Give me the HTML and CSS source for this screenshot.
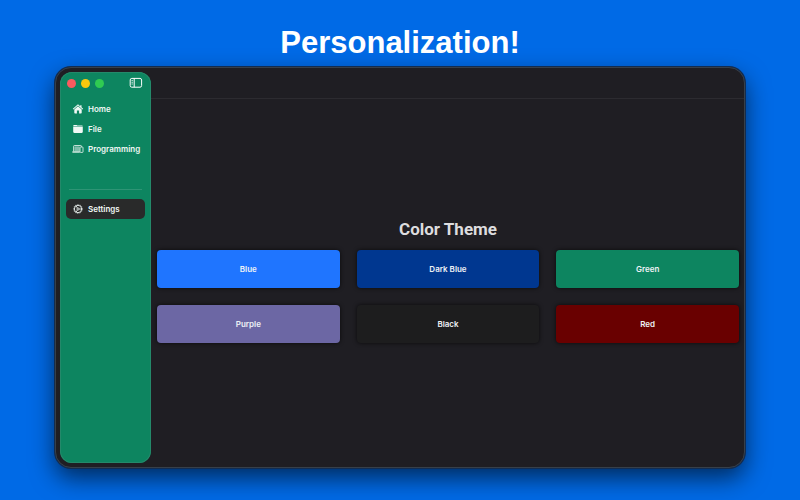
FILE: index.html
```html
<!DOCTYPE html>
<html lang="en">
<head>
  <meta charset="UTF-8">
  <title>Personalization</title>
  <link rel="stylesheet" href="styles.css">
</head>
<body>
  <h1 class="headline">Personalization!</h1>
  <div class="window">
    <aside class="sidebar">
      <div class="titlebar">
        <div class="lights">
          <button class="light close" aria-label="Close"></button>
          <button class="light minimize" aria-label="Minimize"></button>
          <button class="light zoom" aria-label="Zoom"></button>
        </div>
        <button class="toggle" aria-label="Toggle sidebar">
          <svg viewBox="0 0 14 12" width="14" height="12" fill="none" stroke="currentColor">
            <rect x="1.2" y="1.4" width="11.4" height="8.8" rx="1.6"/>
            <path d="M5.2 1.4v8.8"/>
            <path d="M2.5 3.6h1.4M2.5 5.3h1.4M2.5 7h1.4" stroke-width=".8"/>
          </svg>
        </button>
      </div>
      <nav class="nav">
        <a href="#home" class="item">
          <svg viewBox="0 0 12 12" width="12" height="12" fill="currentColor">
            <path d="M6 1.200.8 5.800l.7.7L6 2.600l4.500 3.900.7-.7-1.700-1.500V2.200H8.200v1z"/>
            <path d="M6 3.300 2.300 6.500v3.300c0 .4.300.7.700.7h1.900V7.600h2.200v2.900H9c.4 0 .7-.3.700-.7V6.500z"/>
          </svg>
          Home
        </a>
        <a href="#file" class="item">
          <svg viewBox="0 0 12 12" width="12" height="12" fill="currentColor">
            <path d="M1.200 3.600V3c0-.7.400-1.100 1.100-1.100h1.900c.7 0 .9.700 1.600.7h3.900c.7 0 1.100.4 1.100 1z"/>
            <path d="M1.200 4h9.600v4.800c0 .7-.4 1.100-1.100 1.100H2.300c-.7 0-1.100-.4-1.100-1.100z"/>
          </svg>
          File
        </a>
        <a href="#programming" class="item">
          <svg viewBox="0 0 12 12" width="12" height="12" fill="none" stroke="currentColor" stroke-width=".8">
            <path d="M1.600 8.300V3.300c0-.5.300-.8.800-.8h6.300c.5 0 .8.300.8.800v.5"/>
            <path d="M2.400 3.400h5.200v5H2.400z" fill="currentColor" fill-opacity=".5" stroke="none"/>
            <rect x="8" y="4" width="3" height="5.400" rx=".6"/>
            <path d="M.4 9h7.400" stroke-width="1.300"/>
          </svg>
          Programming
        </a>
        <hr class="divider">
        <a href="#settings" class="item active">
          <svg viewBox="0 0 12 12" width="12" height="12" fill="none" stroke="currentColor">
            <circle cx="6" cy="6" r="3.700" stroke-width=".9"/>
            <circle cx="6" cy="6" r="4.400" stroke-width=".7" stroke-dasharray=".8 .928"/>
            <circle cx="6" cy="6" r="1.100" stroke-width=".8"/>
            <path d="M7.100 6h2.600M5.400 5 4.100 2.800M5.400 7 4.100 9.200" stroke-width=".8"/>
          </svg>
          Settings
        </a>
      </nav>
    </aside>
    <main class="main">
      <div class="toolbar"></div>
      <section class="content">
        <h2 class="title">Color Theme</h2>
        <div class="themes">
          <button class="theme blue">Blue</button>
          <button class="theme dark-blue">Dark Blue</button>
          <button class="theme green">Green</button>
          <button class="theme purple">Purple</button>
          <button class="theme black">Black</button>
          <button class="theme red">Red</button>
        </div>
      </section>
    </main>
  </div>
</body>
</html>
```

FILE: styles.css
```css
:root {
  --page: #006ae6;
  --window: #1f1e23;
  --green: #0d8560;
  --line: #2c2b30;
}
* { box-sizing: border-box; }
body {
  display: flex;
  flex-direction: column;
  min-height: 100vh;
  margin: 0;
  padding: 23px 55px 32px;
  background: var(--page);
  font-family: Inter, sans-serif;
  color: #fff;
  overflow: hidden;
}
button { border: 0; padding: 0; font: inherit; color: inherit; cursor: pointer; }
.headline {
  margin: 0 0 4px;
  font-family: "Liberation Sans", sans-serif;
  font-size: 31px;
  line-height: 40px;
  text-align: center;
}
.window {
  flex: 1;
  display: flex;
  background: var(--window);
  border: 1px solid #37404a;
  border-radius: 16px;
  box-shadow: 0 0 0 1px #122c50, 0 10px 24px rgba(0, 0, 0, .6);
}
.sidebar {
  width: 91px;
  margin: 4px 0 4px 4px;
  background: var(--green);
  border-radius: 12px;
  box-shadow: inset 0 0 0 1px #24896a;
}
.titlebar {
  display: flex;
  align-items: center;
  justify-content: space-between;
  height: 22px;
  padding: 0 8px 0 7px;
}
.lights { display: flex; gap: 5px; }
.light { width: 9px; height: 9px; border-radius: 50%; }
.close { background: #fb5a5f; }
.minimize { background: #fbc80e; }
.zoom { background: #30cb52; }
.toggle { display: flex; background: none; }
.nav { padding: 5px 6px; }
.item {
  display: flex;
  align-items: center;
  gap: 4px;
  height: 20px;
  padding-left: 6px;
  border-radius: 5px;
  font-size: 8px;
  font-weight: 600;
  color: #f1f8f5;
  text-decoration: none;
}
.item svg { flex: none; }
.active { background: #292a2a; }
.divider {
  height: 1px;
  margin: 30px 3px 9px;
  border: 0;
  background: #2e9475;
}
.main { flex: 1; display: flex; flex-direction: column; }
.toolbar { height: 31px; border-bottom: 1px solid var(--line); }
.content {
  flex: 1;
  display: flex;
  flex-direction: column;
  justify-content: center;
  padding: 0 5px 6px 6px;
}
.title {
  margin: 0 0 9px;
  font-family: Roboto, sans-serif;
  font-size: 17px;
  line-height: 24px;
  text-align: center;
  color: #dddddf;
}
.themes {
  display: grid;
  grid-template-columns: repeat(3, 1fr);
  gap: 17px;
}
.theme {
  height: 38px;
  border-radius: 4px;
  box-shadow: 0 0 4px rgba(0, 0, 0, .7);
  font-size: 8px;
  font-weight: 600;
  color: #eef2f6;
}
.blue { background: #1f75ff; }
.dark-blue { background: #003790; }
.green { background: var(--green); }
.purple { background: #6c67a4; }
.black { background: #1d1d1e; }
.red { background: #690000; }
```
